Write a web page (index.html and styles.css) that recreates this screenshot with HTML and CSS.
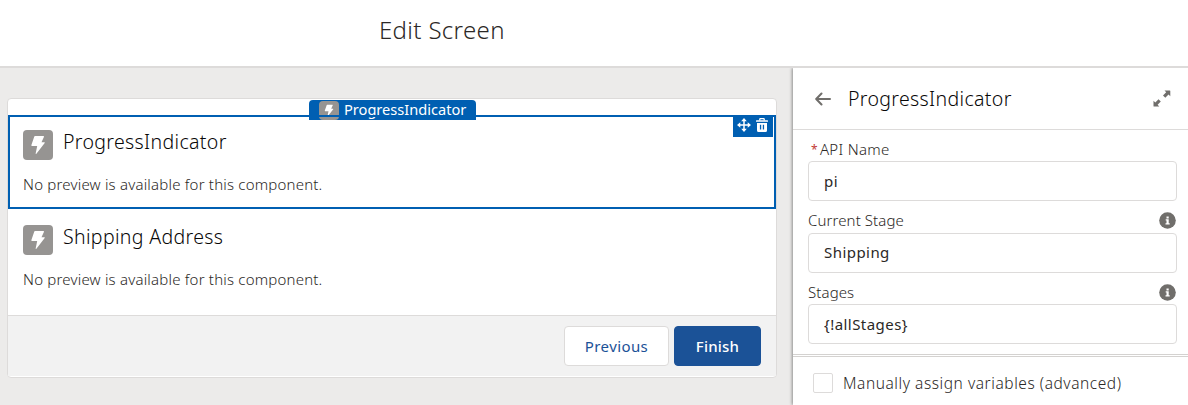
FILE: index.html
```html
<!DOCTYPE html>
<html lang="en">
  <head>
    <meta charset="UTF-8" />
    <title>Edit Screen</title>
    <link rel="stylesheet" href="styles.css">
  </head>
  <body>
    <svg class="defs" width="0" height="0">
      <symbol id="bolt" viewBox="0 0 30 30">
        <path fill="#fff" d="M12 6h8.400q.9 0 .5.900L18.500 12.300h2.800q.9 0 .4.800L13.400 23.700q-.9.800-.7-.4L14.200 16H9q-.9 0-.6-.9L11.300 6.600q.2-.6.7-.6z" />
      </symbol>
      <symbol id="info" viewBox="0 0 17 17">
        <circle cx="8.500" cy="8.500" r="8.300" fill="#706e6b" />
        <path fill="#fff" d="M7.500 4.500h2.200v2H7.500zM6.700 7.300h3v3.900h1v1.200H6.500v-1.200h1V8.500h-.8z" />
      </symbol>
    </svg>
    <div class="header">
      <h1 class="header-title">Edit Screen</h1>
    </div>
    <div class="editor">
      <div class="canvas">
        <div class="card">
          <div class="component selected">
            <div class="tab">
              <svg class="tab-icon"><use href="#bolt" /></svg>
              <span class="tab-text">ProgressIndicator</span>
            </div>
            <div class="actions">
              <svg width="14" height="14" viewBox="0 0 14 14" fill="none" stroke="#fff">
                <path stroke-width="1.500" d="M7 2v10M2 7h10" />
                <path fill="#fff" stroke="none" d="M7 0l2.800 3.300H4.200zM7 14l2.800-3.300H4.200zM0 7l3.300-2.800v5.600zM14 7l-3.300-2.800v5.600z" />
              </svg>
              <svg width="14" height="14" viewBox="0 0 14 14">
                <path fill="none" stroke="#fff" stroke-width="1.300" d="M4.800 2.500V1.200q0-.5.500-.5h3.400q.5 0 .5.500v1.300" />
                <path fill="#fff" d="M1.600 2.200h10.800q.6 0 .6.600v1H1v-1q0-.6.600-.6z" />
                <path fill="#fff" fill-rule="evenodd" d="M2 4.900h10v7.600q0 1.500-1.500 1.500h-7Q2 14 2 12.500zM4.900 6.800v4.800h1.300V6.800zM7.800 6.800v4.800h1.300V6.800z" />
              </svg>
            </div>
            <div class="component-head">
              <svg class="icon"><use href="#bolt" /></svg>
              <h2 class="component-title">ProgressIndicator</h2>
            </div>
            <p class="preview">No preview is available for this component.</p>
          </div>
          <div class="component">
            <div class="component-head">
              <svg class="icon"><use href="#bolt" /></svg>
              <h2 class="component-title">Shipping Address</h2>
            </div>
            <p class="preview">No preview is available for this component.</p>
          </div>
          <div class="footer">
            <button class="btn btn-previous">Previous</button>
            <button class="btn btn-finish">Finish</button>
          </div>
        </div>
      </div>
      <div class="panel">
        <div class="panel-header">
          <svg class="back" width="16" height="14" viewBox="0 0 16 14" fill="none" stroke="#706e6b" stroke-width="2" stroke-linecap="round" stroke-linejoin="round">
            <path d="M15 7H1.500M6.500 1.500L1.200 7l5.300 5.500" />
          </svg>
          <h2 class="panel-title">ProgressIndicator</h2>
          <svg width="18" height="17" viewBox="0 0 18 17" fill="#706e6b">
            <path d="M11.500.5h5.300q.5 0 .5.500v5.300l-1.800-1.700-3.200 3.200-2.300-2.300 3.200-3.200zM6.300 16.500H1q-.5 0-.5-.5v-5.300l1.800 1.700 3.200-3.200 2.300 2.300-3.200 3.200z" />
          </svg>
        </div>
        <div class="form">
          <div class="label"><span class="required">*</span><label for="api">API Name</label></div>
          <input class="input" id="api" value="pi">
          <div class="label label-current"><label for="current">Current Stage</label><svg class="info"><use href="#info" /></svg></div>
          <input class="input input-current" id="current" value="Shipping">
          <div class="label"><label for="stages">Stages</label><svg class="info"><use href="#info" /></svg></div>
          <input class="input" id="stages" value="{!allStages}">
        </div>
        <label class="advanced">
          <span class="checkbox"></span>
          <span class="advanced-text">Manually assign variables (advanced)</span>
        </label>
      </div>
    </div>
  </body>
</html>
```
FILE: styles.css
```css
* {
  box-sizing: border-box;
}
html,
body {
  height: 100%;
  margin: 0;
  overflow: hidden;
}
body {
  display: flex;
  flex-direction: column;
  font-family: "Noto Sans", sans-serif;
  font-size: 15px;
  font-weight: 300;
  color: #2b2826;
  background: #fff;
}
h1,
h2,
p {
  margin: 0;
  font-weight: 300;
}
svg {
  display: block;
  flex-shrink: 0;
}
.defs {
  position: absolute;
}
.header {
  height: 68px;
  flex-shrink: 0;
  padding: 12px 0 0 379px;
  border-bottom: 2px solid #dddbda;
}
.header-title {
  font-size: 24px;
  line-height: 36px;
  letter-spacing: .35px;
}
.editor {
  flex: 1;
  min-height: 0;
  display: flex;
}
.canvas {
  width: 793px;
  flex-shrink: 0;
  padding: 30px 16px 0 7px;
  background: #ecebea;
}
.card {
  height: 280px;
  padding: 16px 0 1px;
  border: 1px solid #dddbda;
  border-radius: 4px;
  background: #fff;
}
.component {
  position: relative;
  height: 94px;
  padding: 16px 15px 0;
}
.selected {
  padding: 13px;
  border: 2px solid #005fb2;
}
.component-head {
  display: flex;
  height: 30px;
}
.icon {
  width: 30px;
  height: 30px;
  border-radius: 4px;
  background: #969492;
}
.component-title {
  margin: -2px 0 0 10px;
  font-size: 19.500px;
  line-height: 28px;
  letter-spacing: .35px;
  color: #080707;
}
.preview {
  margin-top: 13px;
  line-height: 22px;
  letter-spacing: .2px;
}

/* tab sits behind the selection line */
.tab {
  position: absolute;
  top: -17px;
  left: 299px;
  width: 167px;
  height: 20px;
  padding: 1px 10px 0;
  display: flex;
  border-radius: 4px 4px 0 0;
  background: #005fb2;
  color: #fff;
}
.tab::after {
  content: "";
  position: absolute;
  left: 0;
  right: 0;
  top: 15px;
  height: 2px;
  background: #005fb2;
}
.tab-icon {
  width: 20px;
  height: 19px;
  border-radius: 4px;
  background: #969492;
}
.tab-text {
  height: 17px;
  margin-left: 5px;
  font-size: 14.600px;
  font-weight: 400;
  line-height: 17px;
}
.actions {
  position: absolute;
  top: 0;
  right: 1px;
  width: 40px;
  height: 20px;
  padding: 1px 4px;
  display: flex;
  justify-content: space-between;
  background: #005fb2;
}
.footer {
  height: 61px;
  margin-top: 12px;
  padding: 10px 15px;
  display: flex;
  justify-content: flex-end;
  gap: 5px;
  border-top: 1px solid #dddbda;
  background: #f2f2f2;
}
.btn {
  height: 40px;
  padding: 0;
  border: 1px solid #dddbda;
  border-radius: 4px;
  font: inherit;
}
.btn-previous {
  width: 105px;
  background: #fff;
  color: #1b5297;
  font-weight: 400;
  letter-spacing: .4px;
}
.btn-finish {
  width: 87px;
  border-color: #1b5297;
  background: #1b5297;
  color: #fff;
  font-weight: 500;
  letter-spacing: .2px;
}
.panel {
  flex: 1;
  background: #fff;
  box-shadow: -1px 0 3px rgba(0, 0, 0, .4);
  clip-path: inset(0 0 0 -6px);
}
.panel-header {
  height: 62px;
  padding: 0 17px 0 22px;
  display: flex;
  align-items: center;
  border-bottom: 1px solid #dddbda;
}
.panel-title {
  flex: 1;
  margin-left: 17px;
  font-size: 19.500px;
  letter-spacing: .35px;
  color: #080707;
}
.form {
  height: 225px;
  padding: 9px 11px 0 15px;
  border-bottom: 1px solid #d4d2d0;
}
.label {
  height: 22px;
  padding-bottom: 2px;
  display: flex;
  align-items: center;
  justify-content: space-between;
  letter-spacing: .1px;
}
.label:first-child {
  justify-content: flex-start;
  letter-spacing: .3px;
}
.label-current {
  padding-bottom: 4px;
}
.required {
  margin: 0 2px 0 3px;
  font-size: 12px;
  font-weight: 400;
  color: #c23934;
}
.info {
  width: 17px;
  height: 17px;
  margin-right: 1px;
}
.input {
  display: block;
  width: 100%;
  height: 40px;
  margin-bottom: 10px;
  padding: 0 15px 1px;
  border: 1px solid #dddbda;
  border-radius: 4px;
  font: inherit;
  font-weight: 400;
  letter-spacing: .45px;
  color: #2b2826;
}
.input-current {
  margin-bottom: 9px;
  padding-bottom: 3px;
}
.advanced {
  height: 60px;
  margin-top: 1px;
  padding: 16px 20px;
  display: flex;
  border-top: 1px solid #d4d2d0;
}
.checkbox {
  width: 20px;
  height: 20px;
  border: 1px solid #dddbda;
  border-radius: 2px;
}
.advanced-text {
  margin-left: 10px;
  font-size: 15.500px;
  line-height: 20px;
  letter-spacing: .55px;
}
```
